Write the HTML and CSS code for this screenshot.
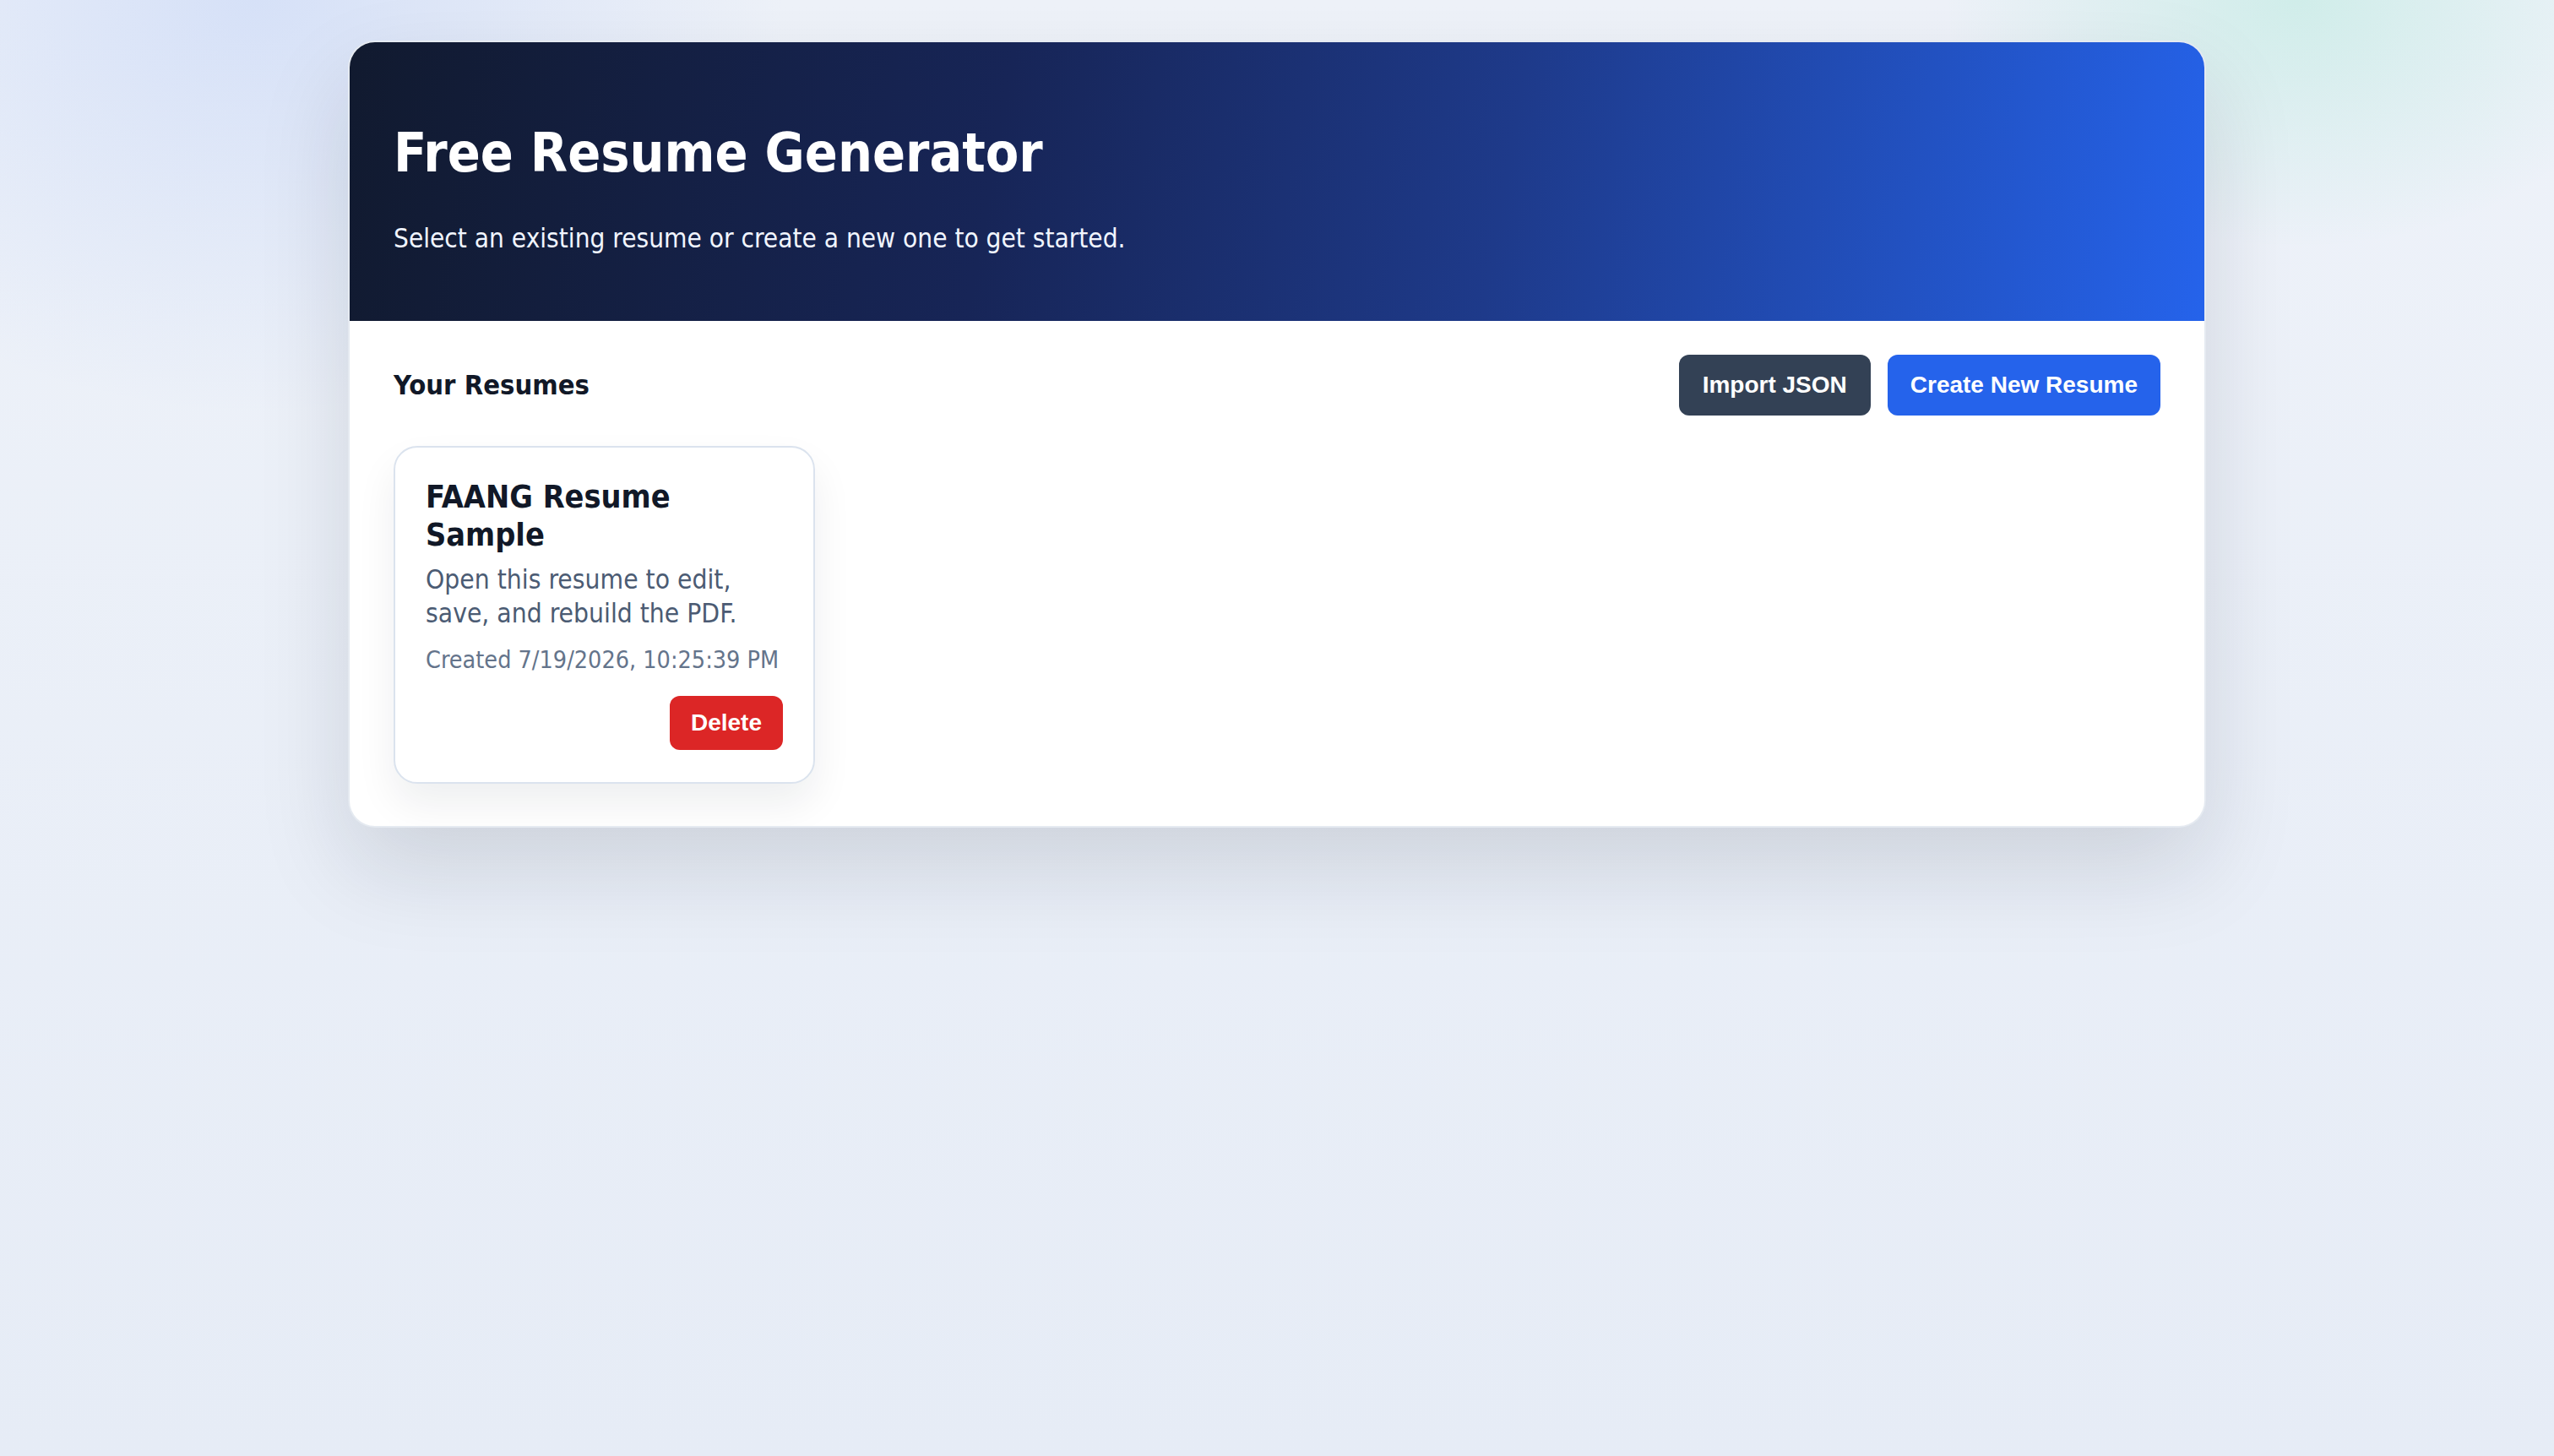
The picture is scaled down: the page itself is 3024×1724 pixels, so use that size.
FILE: index.html
```html
<!DOCTYPE html>
<html lang="en">
<head>
<meta charset="utf-8">
<title>Free Resume Generator</title>
<link rel="stylesheet" href="styles.css">
</head>
<body>
<main class="page">
  <section class="panel">
    <header class="hero">
      <h1 class="hero-title">Free Resume Generator</h1>
      <p class="hero-subtitle">Select an existing resume or create a new one to get started.</p>
    </header>
    <div class="content">
      <div class="toolbar">
        <h2 class="toolbar-title">Your Resumes</h2>
        <div class="actions">
          <button class="btn btn-dark" type="button">Import JSON</button>
          <button class="btn btn-primary" type="button">Create New Resume</button>
        </div>
      </div>
      <div class="resume-grid">
        <article class="resume-card">
          <h3 class="resume-name">FAANG Resume Sample</h3>
          <p class="resume-desc">Open this resume to edit, save, and rebuild the PDF.</p>
          <p class="resume-meta">Created 7/19/2026, 10:25:39 PM</p>
          <div class="resume-actions">
            <button class="btn btn-danger" type="button">Delete</button>
          </div>
        </article>
      </div>
    </div>
  </section>
</main>
</body>
</html>
```

FILE: styles.css
```css
* {
  box-sizing: border-box;
}

html,
body {
  margin: 0;
  min-height: 100%;
}

body {
  min-height: 1724px;
  font-family: "DejaVu Sans Condensed", "DejaVu Sans", sans-serif;
  font-stretch: condensed;
  color: #0f172a;
  background:
    radial-gradient(ellipse 900px 700px at 10% 0%, rgba(96, 140, 240, 0.17), transparent 70%),
    radial-gradient(ellipse 600px 420px at 90% 0%, rgba(52, 211, 153, 0.16), transparent 70%),
    linear-gradient(180deg, #eef2f9 0%, #e6ecf6 100%);
}

.page {
  padding: 48px 24px 48px;
}

.panel {
  max-width: 2200px;
  margin: 0 auto;
  background: #ffffff;
  border: 2px solid rgba(226, 232, 240, 0.9);
  border-radius: 32px;
  overflow: hidden;
  box-shadow: 0 48px 110px rgba(15, 23, 42, 0.13);
}

.hero {
  padding: 93px 52px 74px;
  color: #ffffff;
  background: linear-gradient(100deg, #111a2f 0%, #172557 35%, #1e3a8a 62%, #2563eb 100%);
}

.hero-title {
  margin: 0;
  font-size: 64px;
  line-height: 77px;
  font-weight: 700;
}

.hero-subtitle {
  margin: 38px 0 0;
  font-size: 31.3px;
  line-height: 48px;
  color: #f1f5ff;
}

.content {
  padding: 40px 52px 50px;
}

.toolbar {
  display: flex;
  align-items: center;
  justify-content: space-between;
}

.toolbar-title {
  margin: 0;
  font-size: 32.5px;
  font-weight: 700;
  color: #111827;
}

.actions {
  display: flex;
  gap: 20px;
}

.btn {
  border: 0;
  border-radius: 12px;
  font-family: "Liberation Sans", Arial, sans-serif;
  font-weight: 700;
  font-size: 28px;
  line-height: 32px;
  color: #ffffff;
  padding: 20px 28px;
  cursor: pointer;
}

.btn-dark {
  background: #334155;
}

.btn-primary {
  background: #2563eb;
  padding: 20px 27px;
}

.btn-danger {
  background: #dc2626;
  padding: 16px 25px;
}

.resume-grid {
  margin-top: 36px;
  display: grid;
  grid-template-columns: repeat(auto-fill, minmax(496px, 1fr));
  gap: 32px;
}

.resume-card {
  border: 2px solid #dbe3ee;
  border-radius: 28px;
  padding: 36px 36px 38px;
  background: #ffffff;
  box-shadow: 0 24px 48px rgba(15, 23, 42, 0.07);
}

.resume-name {
  margin: 0;
  font-size: 37.5px;
  line-height: 45px;
  font-weight: 700;
  color: #111827;
}

.resume-desc {
  margin: 10px 0 0;
  font-size: 31.5px;
  line-height: 40px;
  color: #4b5b73;
}

.resume-meta {
  margin: 16px 0 0;
  font-size: 28.5px;
  line-height: 39px;
  color: #64748b;
}

.resume-actions {
  margin-top: 23px;
  display: flex;
  justify-content: flex-end;
}
```
